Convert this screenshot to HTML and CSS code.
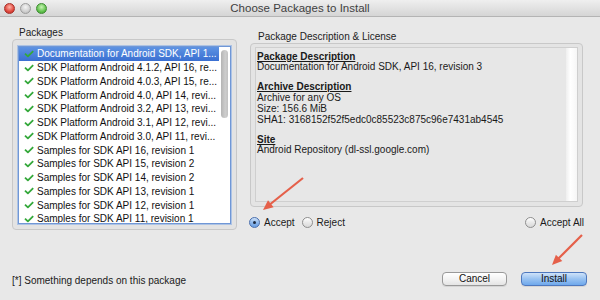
FILE: index.html
```html
<!DOCTYPE html>
<html lang="en">
<head>
  <meta charset="UTF-8" />
  <title>Choose Packages to Install</title>
  <link rel="stylesheet" href="styles.css">
</head>
<body>
  <svg width="0" height="0" class="defs">
    <symbol id="chk" viewBox="0 0 10 8">
      <path d="M1 3.6 L3.9 6.4 L9.2 1.2" fill="none" stroke="#34a83a" stroke-width="1.8" stroke-linejoin="round"/>
    </symbol>
  </svg>

  <div class="window">
    <div class="titlebar">
      <div class="lights">
        <span class="light close"></span>
        <span class="light min"></span>
        <span class="light zoom"></span>
      </div>
      <div class="title">Choose Packages to Install</div>
      <div></div>
    </div>

    <div class="main">
      <!-- Packages -->
      <div class="col col-left">
        <div class="group-label">Packages</div>
        <div class="group">
          <div class="list">
            <div class="rows">
              <div class="row selected"><svg class="check"><use href="#chk"/></svg>Documentation for Android SDK, API 1...</div>
              <div class="row"><svg class="check"><use href="#chk"/></svg>SDK Platform Android 4.1.2, API 16, re...</div>
              <div class="row"><svg class="check"><use href="#chk"/></svg>SDK Platform Android 4.0.3, API 15, re...</div>
              <div class="row"><svg class="check"><use href="#chk"/></svg>SDK Platform Android 4.0, API 14, revi...</div>
              <div class="row"><svg class="check"><use href="#chk"/></svg>SDK Platform Android 3.2, API 13, revi...</div>
              <div class="row"><svg class="check"><use href="#chk"/></svg>SDK Platform Android 3.1, API 12, revi...</div>
              <div class="row"><svg class="check"><use href="#chk"/></svg>SDK Platform Android 3.0, API 11, revi...</div>
              <div class="row"><svg class="check"><use href="#chk"/></svg>Samples for SDK API 16, revision 1</div>
              <div class="row"><svg class="check"><use href="#chk"/></svg>Samples for SDK API 15, revision 2</div>
              <div class="row"><svg class="check"><use href="#chk"/></svg>Samples for SDK API 14, revision 2</div>
              <div class="row"><svg class="check"><use href="#chk"/></svg>Samples for SDK API 13, revision 1</div>
              <div class="row"><svg class="check"><use href="#chk"/></svg>Samples for SDK API 12, revision 1</div>
              <div class="row"><svg class="check"><use href="#chk"/></svg>Samples for SDK API 11, revision 1</div>
            </div>
            <div class="vscroll"><div class="thumb"></div></div>
          </div>
        </div>
      </div>

      <!-- Description & license -->
      <div class="col col-right">
        <div class="group-label">Package Description &amp; License</div>
        <div class="group desc-group">
          <div class="desc">
            <div class="desc-text">
              <div class="section">
                <div class="heading">Package Description</div>
                <div>Documentation for Android SDK, API 16, revision 3</div>
              </div>
              <div class="section">
                <div class="heading">Archive Description</div>
                <div>Archive for any OS</div>
                <div>Size: 156.6 MiB</div>
                <div>SHA1: 3168152f52f5edc0c85523c875c96e7431ab4545</div>
              </div>
              <div class="section">
                <div class="heading">Site</div>
                <div>Android Repository (dl-ssl.google.com)</div>
              </div>
            </div>
            <div class="desc-scroll"></div>
          </div>
        </div>
        <div class="radios">
          <div class="radio checked"><span class="knob"></span>Accept</div>
          <div class="radio"><span class="knob"></span>Reject</div>
          <div class="radio accept-all"><span class="knob"></span>Accept All</div>
        </div>
      </div>
    </div>

    <div class="footer">
      <div class="note">[*] Something depends on this package</div>
      <div class="buttons">
        <button class="btn">Cancel</button>
        <button class="btn primary">Install</button>
      </div>
    </div>

    <!-- annotation arrows drawn over the dialog -->
    <svg class="arrows" width="600" height="300" viewBox="0 0 600 300">
      <line x1="303" y1="178" x2="269.2" y2="205" stroke="#e5604a" stroke-width="2.2"/>
      <polygon points="263,210 273.6,207.3 268,200.2" fill="#e5604a"/>
      <line x1="582" y1="235" x2="557.7" y2="259.3" stroke="#e5604a" stroke-width="2.2"/>
      <polygon points="552,265 562.3,261.1 555.9,254.8" fill="#e5604a"/>
    </svg>
  </div>
</body>
</html>
```

FILE: styles.css
```css
* {
  box-sizing: border-box;
}

body {
  margin: 0;
  font-family: "Liberation Sans", Arial, sans-serif;
  font-size: 10px;
  color: #1c1c1c;
  background: #e8e8e8;
}

.defs {
  position: absolute;
}

.window {
  position: relative;
  width: 600px;
  height: 300px;
  display: flex;
  flex-direction: column;
  background: #e8e8e8;
  overflow: hidden;
}

/* title bar */
.titlebar {
  height: 17px;
  display: grid;
  grid-template-columns: 1fr auto 1fr;
  align-items: center;
  background: linear-gradient(#efefef, #d5d5d5);
  border-bottom: 1px solid #b4b4b4;
}

.lights {
  display: flex;
  gap: 5px;
  padding-left: 4px;
}

.light {
  width: 11px;
  height: 11px;
  border-radius: 50%;
}

.light.close {
  background: radial-gradient(circle at 50% 35%, #ffb3a8, #e0493e 60%, #b8281f);
  border: 1px solid #a5302a;
}

.light.min {
  background: radial-gradient(circle at 50% 35%, #f4f4f4, #cfcfcf 60%, #b3b3b3);
  border: 1px solid #9c9c9c;
}

.light.zoom {
  background: radial-gradient(circle at 50% 35%, #c9f3b5, #63c34f 60%, #3b9a2c);
  border: 1px solid #3f8a33;
}

.title {
  font-size: 11.5px;
  color: #3f3f3f;
}

/* two columns */
.main {
  display: flex;
  gap: 13px;
  padding: 0 17px 0 12px;
}

.col {
  display: flex;
  flex-direction: column;
}

.col-left {
  width: 225px;
  padding-top: 10px;
}

.col-right {
  flex: 1;
  padding-top: 14px;
}

.group-label {
  line-height: 12px;
  padding-left: 7px;
  color: #222;
}

.col-right .group-label {
  padding-left: 8px;
}

.group {
  height: 191px;
  background: #e3e3e3;
  border: 1px solid #c8c8c8;
  border-radius: 4px;
  padding: 6px 5px 5px 5px;
}

/* package list */
.list {
  height: 100%;
  display: flex;
  background: #fff;
  border: 1px solid #7097d6;
  box-shadow: 0 0 0 1px rgba(130, 170, 230, 0.55);
}

.rows {
  flex: 1;
  overflow: hidden;
}

.row {
  height: 13.75px;
  display: flex;
  align-items: center;
  padding-left: 5px;
  white-space: nowrap;
  font-size: 10px;
  color: #111;
}

.row.selected {
  background: linear-gradient(#5e93e2, #3a6fd2);
  color: #fff;
}

.check {
  width: 10px;
  height: 8px;
  margin-right: 3px;
  flex-shrink: 0;
}

.vscroll {
  width: 11px;
  padding: 3px 2px 0 2px;
}

.thumb {
  height: 68px;
  border-radius: 4px;
  background: linear-gradient(90deg, #b4b4b4, #cdcdcd 60%, #c2c2c2);
}

/* description box */
.desc-group {
  height: 164px;
  background: #e4e4e4;
  padding: 3px 4px 4px 4px;
}

.desc {
  height: 100%;
  display: flex;
  background: #e7e7e7;
  border: 1px solid #cfcfcf;
}

.desc-text {
  flex: 1;
  padding: 3.5px 0 0 1px;
  line-height: 10.7px;
  color: #1a1a1a;
}

.section + .section {
  margin-top: 9.5px;
}

.heading {
  font-weight: bold;
  text-decoration: underline;
}

.desc-scroll {
  width: 11px;
  background: linear-gradient(90deg, #efefef, #ffffff 40%, #f6f6f6);
}

/* radios */
.radios {
  display: flex;
  align-items: center;
  height: 12px;
  margin-top: 9px;
  margin-left: -1px;
}

.radio {
  display: flex;
  align-items: center;
  gap: 4px;
  margin-right: 7px;
  color: #1a1a1a;
}

.radio.accept-all {
  margin-left: auto;
  margin-right: -1px;
}

.knob {
  width: 11px;
  height: 11px;
  border-radius: 50%;
  border: 1px solid #8e8e8e;
  background: linear-gradient(#ffffff, #e9e9e9 50%, #d9d9d9);
  display: flex;
  align-items: center;
  justify-content: center;
}

.radio.checked .knob {
  border-color: #4a6fae;
  background: linear-gradient(#cfe2f8, #8fb9ec 50%, #6a9fe3);
}

.radio.checked .knob::after {
  content: "";
  width: 3px;
  height: 3px;
  border-radius: 50%;
  background: #1d2a40;
}

/* bottom bar */
.footer {
  margin-top: auto;
  display: flex;
  justify-content: space-between;
  align-items: center;
  padding: 0 13px 14px 12px;
}

.note {
  color: #1a1a1a;
  padding-top: 2px;
}

.buttons {
  display: flex;
  gap: 14px;
}

.btn {
  height: 14px;
  width: 65px;
  padding: 0;
  font-family: inherit;
  font-size: 10px;
  line-height: 12px;
  color: #111;
  border: 1px solid #999;
  border-radius: 4px;
  background: linear-gradient(#ffffff, #f3f3f3 50%, #e4e4e4);
  box-shadow: 0 1px 0 rgba(0, 0, 0, 0.08);
}

.btn.primary {
  width: 66px;
  border-color: #4e78be;
  background: linear-gradient(#cfe3f9, #98c2f1 50%, #6ea8ec);
}

.arrows {
  position: absolute;
  top: 0;
  left: 0;
  pointer-events: none;
}
```
